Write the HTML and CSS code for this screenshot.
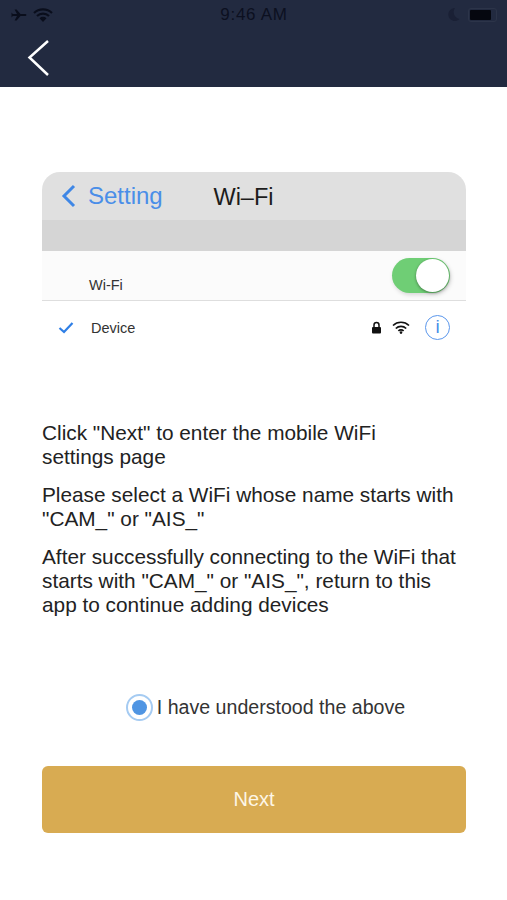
FILE: index.html
```html
<!DOCTYPE html>
<html lang="en">
<head>
    <meta charset="UTF-8">
    <meta name="viewport" content="width=device-width, initial-scale=1.0">
    <title>Add Device</title>
    <link rel="stylesheet" href="styles.css">
</head>
<body>
    <div class="navbar">
        <div class="status-bar">
            <div class="status-left">
                <svg width="16" height="12" viewBox="0 0 16 12"><path d="M0.500 3.500L1.800 5H6L3.600 0.500H5.600L9.500 5H13.500C16.200 5 16.200 7 13.500 7H9.500L5.600 11.500H3.600L6 7H1.800L0.500 8.500z" fill="#0a0e1c"/></svg>
                <svg width="20" height="14" viewBox="0 0 20 14"><path d="M1 5a13 13 0 0 1 18 0M4 8a8.600 8.600 0 0 1 12 0" fill="none" stroke="#0a0e1c" stroke-width="2.200"/><path d="M6.500 10.300a5 5 0 0 1 7 0L10 14z" fill="#0a0e1c"/></svg>
            </div>
            <div class="status-time">9:46 AM</div>
            <div class="status-right">
                <svg width="13" height="15" viewBox="0 0 13 15"><path d="M8 1a6.500 6.500 0 1 0 4.500 11A7 7 0 0 1 8 1z" fill="#1a2035"/></svg>
                <div class="battery"><div class="battery-level"></div></div>
            </div>
        </div>
        <div class="nav-row">
            <svg width="24" height="36" viewBox="0 0 24 36"><path d="M22 1L3.500 17.500 22 35" fill="none" stroke="#fff" stroke-width="2.500"/></svg>
        </div>
    </div>

    <div class="container">
        <div class="wifi-card">
            <div class="card-header">
                <div class="back-link">
                    <svg width="15" height="24" viewBox="0 0 15 24"><path d="M13 2L3 12l10 10" fill="none" stroke="#3f87e6" stroke-width="3"/></svg>
                    <span>Setting</span>
                </div>
                <div class="card-title">Wi–Fi</div>
            </div>
            <div class="card-band"></div>
            <div class="wifi-row">
                <span>Wi-Fi</span>
                <div class="toggle"><div class="toggle-knob"></div></div>
            </div>
            <div class="device-row">
                <svg class="check" width="16" height="12" viewBox="0 0 16 12"><path d="M1.500 6L6 10 14.500 1" fill="none" stroke="#2f7fe6" stroke-width="2.200"/></svg>
                <span class="device-name">Device</span>
                <div class="device-icons">
                    <svg width="11" height="13" viewBox="0 0 11 13"><path d="M3 6V4a2.500 2.500 0 0 1 5 0v2" fill="none" stroke="#111" stroke-width="1.500"/><rect x="1" y="6" width="9" height="6.500" rx="1" fill="#111"/></svg>
                    <svg width="18" height="13" viewBox="0 0 18 13"><path d="M1 4.500a11.500 11.500 0 0 1 16 0M3.800 7.500a7.500 7.500 0 0 1 10.400 0M6.400 10a3.500 3.500 0 0 1 5.200 0" fill="none" stroke="#111" stroke-width="1.700"/><circle cx="9" cy="11.600" r="1.300" fill="#111"/></svg>
                    <div class="info-icon">i</div>
                </div>
            </div>
        </div>

        <div class="instructions">
            <p>Click "Next" to enter the mobile WiFi<br>settings page</p>
            <p>Please select a WiFi whose name starts with<br>"CAM_" or "AIS_"</p>
            <p>After successfully connecting to the WiFi that<br>starts with "CAM_" or "AIS_", return to this<br>app to continue adding devices</p>
        </div>

        <div class="confirm">
            <div class="radio"><div class="radio-dot"></div></div>
            <span>I have understood the above</span>
        </div>

        <div class="btn">Next</div>
    </div>
</body>
</html>
```

FILE: styles.css
```css
body {
    font-family: "Liberation Sans", Arial, sans-serif;
    background-color: #fff;
    margin: 0;
    padding: 0;
}
.navbar {
    background-color: #222a40;
    height: 87px;
    box-sizing: border-box;
}
.status-bar {
    display: flex;
    align-items: center;
    height: 29px;
    padding: 0 10px 0 11px;
}
.status-left, .status-right {
    display: flex;
    flex: 1;
    align-items: center;
    gap: 6px;
}
.status-right {
    justify-content: flex-end;
}
.status-time {
    color: #0c1020;
    font-size: 17px;
    letter-spacing: 0.7px;
}
.battery {
    width: 29px;
    height: 14px;
    border: 1px solid #2c3449;
    border-radius: 3px;
    padding: 1px;
    box-sizing: border-box;
    margin-left: 2px;
}
.battery-level {
    width: 21px;
    height: 10px;
    background-color: #05070f;
    border-radius: 1px;
}
.nav-row {
    padding: 11px 0 0 26px;
    line-height: 0;
}
.container {
    padding: 85px 41px 0 42px;
}
.wifi-card {
    border-radius: 18px 18px 0 0;
    overflow: hidden;
}
.card-header {
    background-color: #e0e0e0;
    height: 48px;
    position: relative;
    display: flex;
    align-items: center;
    justify-content: center;
}
.back-link {
    position: absolute;
    left: 19px;
    top: 10px;
    display: flex;
    align-items: center;
    gap: 12px;
    color: #4a8ee8;
    font-size: 24px;
}
.card-title {
    font-size: 23.500px;
    color: #1c1c1c;
    margin-right: 21px;
    padding-top: 2px;
}
.card-band {
    background-color: #d5d5d5;
    height: 31px;
}
.wifi-row {
    background-color: #fbfbfb;
    height: 50px;
    border-bottom: 1.500px solid #dedede;
    box-sizing: border-box;
    display: flex;
    justify-content: space-between;
    padding: 0 16px 0 47px;
    font-size: 14.500px;
    color: #333;
}
.wifi-row span {
    margin-top: 26px;
}
.toggle {
    width: 58px;
    height: 35px;
    border-radius: 18px;
    background-color: #6fce75;
    margin-top: 7px;
    display: flex;
    justify-content: flex-end;
    box-shadow: 1px 2px 4px rgba(0, 0, 0, 0.15);
}
.toggle-knob {
    width: 33px;
    height: 33px;
    margin: 1px;
    border-radius: 50%;
    background-color: #fff;
    box-shadow: 0 1px 3px rgba(0, 0, 0, 0.4);
}
.device-row {
    display: flex;
    align-items: center;
    height: 53px;
    padding: 0 16px;
    font-size: 14.500px;
    color: #333;
}
.device-name {
    margin-left: 17px;
}
.device-icons {
    margin-left: auto;
    display: flex;
    align-items: center;
    gap: 10px;
}
.info-icon {
    width: 25px;
    height: 25px;
    border: 1.500px solid #5b97ec;
    border-radius: 50%;
    box-sizing: border-box;
    color: #4a8ee8;
    font-size: 19px;
    line-height: 22px;
    text-align: center;
    margin-left: 5px;
}
.instructions {
    margin-top: 67px;
    font-size: 20.800px;
    line-height: 24px;
    color: #222;
}
.instructions p {
    margin: 0 0 14px;
}
.confirm {
    display: flex;
    align-items: center;
    justify-content: center;
    margin-top: 77px;
    font-size: 19.600px;
    color: #333;
    gap: 4px;
    padding-left: 23px;
}
.radio {
    width: 27px;
    height: 27px;
    border: 2px solid #a5cbf2;
    border-radius: 50%;
    box-sizing: border-box;
    display: flex;
    align-items: center;
    justify-content: center;
}
.radio-dot {
    width: 15px;
    height: 15px;
    border-radius: 50%;
    background-color: #4f95e3;
}
.btn {
    margin-top: 45px;
    height: 67px;
    line-height: 67px;
    background-color: #d8ab52;
    border-radius: 6px;
    color: #fdf6e6;
    font-size: 20px;
    text-align: center;
}
```
